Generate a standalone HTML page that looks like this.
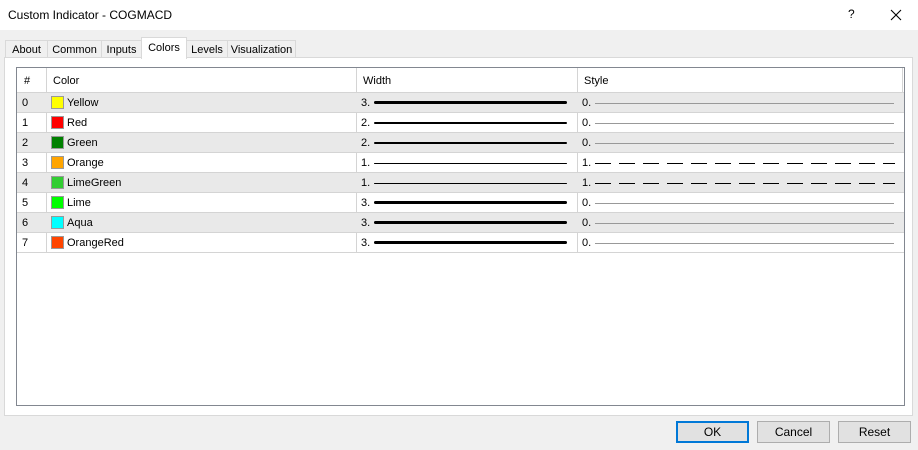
<!DOCTYPE html>
<html><head><style>
*{box-sizing:border-box;margin:0;padding:0}
body{width:918px;height:450px;background:#f0f0f0;font-family:"Liberation Sans",Arial,sans-serif;font-size:11px;color:#000;position:relative;overflow:hidden}
.abs{position:absolute}
.title{left:0;top:0;width:918px;height:30px;background:#fff}
.tab{position:absolute;top:40px;height:18px;border:1px solid #d9d9d9;border-bottom:none;background:#f0f0f0;text-align:center;line-height:18px}
.tab.sel{top:37px;height:22px;background:#fff;z-index:2;line-height:20px}
.panel{left:4px;top:57px;width:909px;height:359px;background:#fff;border:1px solid #d9d9d9}
.list{left:16px;top:67px;width:889px;height:339px;border:1px solid #828790;background:#fff}
.row{position:absolute;left:0;width:887px;height:20px;border-bottom:1px solid #d4d4d4}
.row.g{background:#e9e9e9}
.row span{position:absolute;top:4px}
.vl{position:absolute;top:0;width:1px;background:#d4d4d4}
.sw{position:absolute;left:34px;top:3px;width:13px;height:13px;border:1px solid #999}
.wl{position:absolute;left:357px;height:0;border-top-style:solid;border-color:#000;width:193px;border-radius:2px}
.sl{position:absolute;left:578px;top:10px;width:299px;height:1px;background:#999}
.dl{position:absolute;left:578px;top:10px;width:300px;height:1px;background:repeating-linear-gradient(90deg,#000 0 16px,transparent 16px 24px)}
.btn{position:absolute;top:421px;width:73px;height:22px;border:1px solid #adadad;background:#e1e1e1;text-align:center;line-height:20px;font-size:12px}
</style></head><body>
<div class="abs title"></div>
<div class="abs" style="left:8px;top:8px;font-size:12px">Custom Indicator - COGMACD</div>
<div class="abs" style="left:848px;top:7px;font-size:12px">?</div>
<svg class="abs" style="left:890px;top:9px" width="12" height="12"><path d="M1 1L11 11M11 1L1 11" stroke="#000" stroke-width="1.1"/></svg>
<div class="tab" style="left:5px;width:43px">About</div>
<div class="tab" style="left:47px;width:55px">Common</div>
<div class="tab" style="left:101px;width:41px">Inputs</div>
<div class="tab sel" style="left:141px;width:46px">Colors</div>
<div class="tab" style="left:186px;width:42px">Levels</div>
<div class="tab" style="left:227px;width:69px">Visualization</div>
<div class="abs panel"></div>
<div class="abs list">
 <div class="row" style="top:0;height:25px;border-bottom:1px solid #d4d4d4"><span style="left:7px;top:7px">#</span><span style="left:36px;top:7px">Color</span><span style="left:346px;top:7px">Width</span><span style="left:567px;top:7px">Style</span></div>
 <div class="vl" style="left:29px;height:185px"></div>
 <div class="vl" style="left:339px;height:185px"></div>
 <div class="vl" style="left:560px;height:185px"></div>
 <div class="vl" style="left:885px;height:25px"></div>
 <div class="row g" style="top:25px"><span style="left:5px">0</span><div class="sw" style="background:#ffff00"></div><span style="left:50px">Yellow</span><span style="left:344px">3.</span><div class="wl" style="top:8px;border-top-width:3px"></div><span style="left:565px">0.</span><div class="sl"></div></div>
 <div class="row" style="top:45px"><span style="left:5px">1</span><div class="sw" style="background:#ff0000"></div><span style="left:50px">Red</span><span style="left:344px">2.</span><div class="wl" style="top:9px;border-top-width:2px"></div><span style="left:565px">0.</span><div class="sl"></div></div>
 <div class="row g" style="top:65px"><span style="left:5px">2</span><div class="sw" style="background:#008000"></div><span style="left:50px">Green</span><span style="left:344px">2.</span><div class="wl" style="top:9px;border-top-width:2px"></div><span style="left:565px">0.</span><div class="sl"></div></div>
 <div class="row" style="top:85px"><span style="left:5px">3</span><div class="sw" style="background:#ffa500"></div><span style="left:50px">Orange</span><span style="left:344px">1.</span><div class="wl" style="top:10px;border-top-width:1px"></div><span style="left:565px">1.</span><div class="dl"></div></div>
 <div class="row g" style="top:105px"><span style="left:5px">4</span><div class="sw" style="background:#32cd32"></div><span style="left:50px">LimeGreen</span><span style="left:344px">1.</span><div class="wl" style="top:10px;border-top-width:1px"></div><span style="left:565px">1.</span><div class="dl"></div></div>
 <div class="row" style="top:125px"><span style="left:5px">5</span><div class="sw" style="background:#00ff00"></div><span style="left:50px">Lime</span><span style="left:344px">3.</span><div class="wl" style="top:8px;border-top-width:3px"></div><span style="left:565px">0.</span><div class="sl"></div></div>
 <div class="row g" style="top:145px"><span style="left:5px">6</span><div class="sw" style="background:#00ffff"></div><span style="left:50px">Aqua</span><span style="left:344px">3.</span><div class="wl" style="top:8px;border-top-width:3px"></div><span style="left:565px">0.</span><div class="sl"></div></div>
 <div class="row" style="top:165px"><span style="left:5px">7</span><div class="sw" style="background:#ff4500"></div><span style="left:50px">OrangeRed</span><span style="left:344px">3.</span><div class="wl" style="top:8px;border-top-width:3px"></div><span style="left:565px">0.</span><div class="sl"></div></div>
</div>
<div class="btn" style="left:676px;border:2px solid #0078d7;line-height:18px">OK</div>
<div class="btn" style="left:757px">Cancel</div>
<div class="btn" style="left:838px">Reset</div>
</body></html>
